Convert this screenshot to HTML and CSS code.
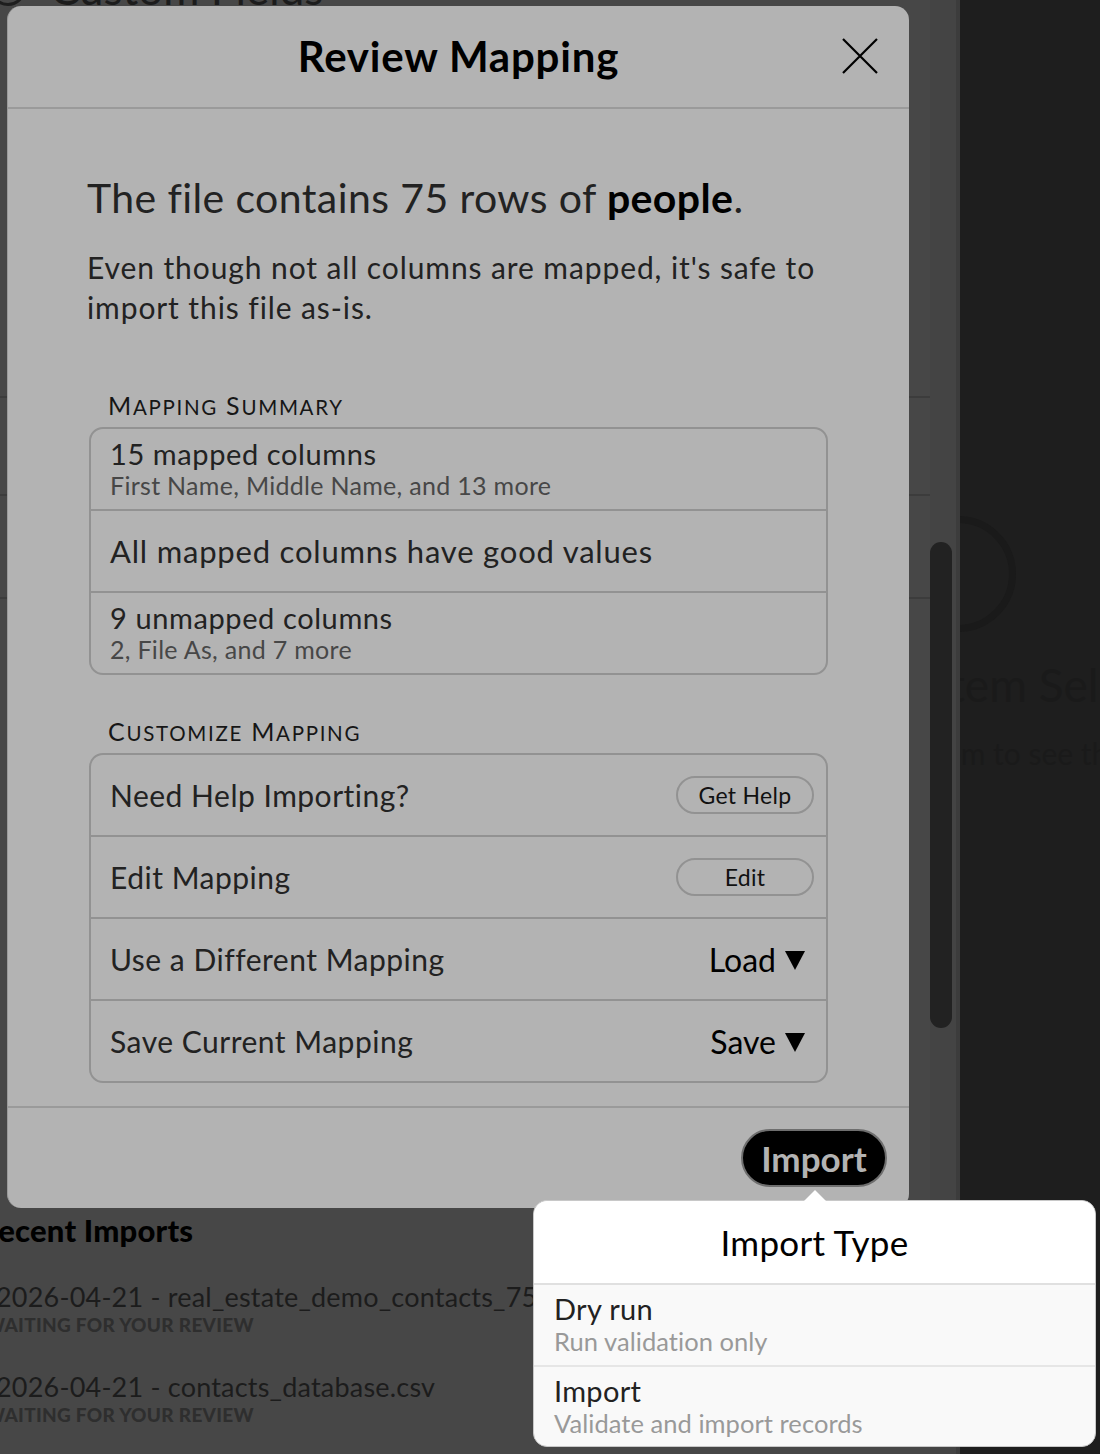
FILE: index.html
```html
<!DOCTYPE html>
<html>
<head>
<meta charset="utf-8">
<link rel="stylesheet" href="styles.css">
</head>
<body>
<div class="page">
  <div class="main">
    <div class="bg-top">
      <span class="bg-icon"></span>
      <span class="bg-heading">Custom Fields</span>
    </div>
    <div class="bg-list">
      <div class="bg-row bg-row-a"></div>
      <div class="bg-row bg-row-b"></div>
      <div class="bg-row bg-row-c"></div>
    </div>
    <div class="recent">
      <h2 class="recent-title">Recent Imports</h2>
      <div class="recent-item">
        <div class="recent-name">2026-04-21 - real_estate_demo_contacts_75.csv</div>
        <div class="recent-status">WAITING FOR YOUR REVIEW</div>
      </div>
      <div class="recent-item">
        <div class="recent-name">2026-04-21 - contacts_database.csv</div>
        <div class="recent-status">WAITING FOR YOUR REVIEW</div>
      </div>
    </div>
  </div>
  <div class="track"><div class="thumb"></div></div>
  <div class="detail">
    <div class="detail-circle"></div>
    <div class="detail-title">No Item Selected</div>
    <div class="detail-text">Select an item to see the details</div>
  </div>
</div>

<div class="modal">
  <div class="modal-header">
    <h1 class="modal-title">Review Mapping</h1>
    <svg class="close" width="36" height="36" viewBox="0 0 36 36"><path d="M1 1 L35 35 M35 1 L1 35" stroke="#000" stroke-width="2.2" fill="none"/></svg>
  </div>
  <div class="modal-body">
    <p class="lead">The file contains 75 rows of <b>people</b>.</p>
    <p class="para">Even though not all columns are mapped, it's safe to import this file as-is.</p>

    <div class="section-label">M<span class="sc">APPING</span> S<span class="sc">UMMARY</span></div>
    <div class="card">
      <div class="row row-stack">
        <div class="row-main">15 mapped columns</div>
        <div class="row-sub">First Name, Middle Name, and 13 more</div>
      </div>
      <div class="row">
        <div class="row-main row-big">All mapped columns have good values</div>
      </div>
      <div class="row row-stack">
        <div class="row-main">9 unmapped columns</div>
        <div class="row-sub">2, File As, and 7 more</div>
      </div>
    </div>

    <div class="section-label section-label-2">C<span class="sc">USTOMIZE</span> M<span class="sc">APPING</span></div>
    <div class="card">
      <div class="row">
        <div class="row-main">Need Help Importing?</div>
        <span class="pill">Get Help</span>
      </div>
      <div class="row">
        <div class="row-main">Edit Mapping</div>
        <span class="pill">Edit</span>
      </div>
      <div class="row">
        <div class="row-main">Use a Different Mapping</div>
        <span class="drop">Load<span class="tri"></span></span>
      </div>
      <div class="row">
        <div class="row-main">Save Current Mapping</div>
        <span class="drop">Save<span class="tri"></span></span>
      </div>
    </div>
  </div>
  <div class="modal-footer">
    <span class="import-btn">Import</span>
  </div>
</div>

<div class="popover">
  <div class="popover-title">Import Type</div>
  <div class="popover-item">
    <div class="pi-main">Dry run</div>
    <div class="pi-sub">Run validation only</div>
  </div>
  <div class="popover-item">
    <div class="pi-main">Import</div>
    <div class="pi-sub">Validate and import records</div>
  </div>
</div>
</body>
</html>
```

FILE: styles.css
```css
html, body {
  margin: 0;
  padding: 0;
}
body {
  font-family: "Lato", "Open Sans", sans-serif;
  width: 1100px;
  height: 1454px;
  overflow: hidden;
  position: relative;
  background: #464646;
}
.page {
  display: flex;
  width: 1100px;
  height: 1454px;
}
.main {
  width: 930px;
  background: #474747;
  overflow: hidden;
  display: flex;
  flex-direction: column;
}
.bg-top {
  height: 0;
  position: relative;
}
.bg-icon {
  position: absolute;
  left: -10px;
  top: -30px;
  width: 30px;
  height: 30px;
  border: 3px solid #1e1e1e;
  border-radius: 50%;
}
.bg-heading {
  position: absolute;
  left: 50px;
  top: -38px;
  font-size: 44px;
  color: #1c1c1c;
  white-space: nowrap;
}
.bg-list {
  display: flex;
  flex-direction: column;
}
.bg-row {
  border-bottom: 2px solid #3c3c3c;
}
.bg-row-a { height: 396px; }
.bg-row-b { height: 96px; }
.bg-row-c { height: 101px; }
.recent {
  margin-top: 611px;
}
.recent-title {
  margin: 0 0 0 -21px;
  font-size: 31px;
  font-weight: 900;
  color: #000;
  line-height: 40px;
  letter-spacing: 0.2px;
}
.recent-item {
  margin: 0 0 0 -4px;
  padding-top: 32px;
  padding-bottom: 2px;
}
.recent-name {
  font-size: 27px;
  line-height: 30px;
  color: #1c1c1c;
  white-space: nowrap;
  letter-spacing: 0.2px;
}
.recent-status {
  margin-left: -11px;
  font-size: 19px;
  font-weight: 900;
  line-height: 26px;
  color: #2e2e2e;
  letter-spacing: 0.3px;
}
.track {
  width: 26px;
  background: #444;
  border-right: 4px solid #3c3c3c;
  display: flex;
  flex-direction: column;
}
.thumb {
  margin-top: 542px;
  width: 22px;
  height: 486px;
  border-radius: 11px;
  background: #222;
}
.detail {
  flex: 1;
  background: #1e1e1e;
  overflow: hidden;
  display: flex;
  flex-direction: column;
}
.detail-circle {
  margin-top: 516px;
  margin-left: -60px;
  width: 102px;
  height: 102px;
  border: 7px solid #1a1a1a;
  border-radius: 50%;
  flex: none;
}
.detail-title {
  margin-top: 25px;
  margin-left: -96px;
  font-size: 46px;
  line-height: 56px;
  color: #1a1a1a;
  white-space: nowrap;
}
.detail-text {
  margin-top: 22px;
  margin-left: -160px;
  font-size: 30px;
  line-height: 36px;
  color: #1a1a1a;
  white-space: nowrap;
}

/* modal */
.modal {
  position: absolute;
  left: 7px;
  top: 6px;
  width: 902px;
  height: 1202px;
  box-sizing: border-box;
  background: #b3b3b3;
  border-radius: 14px;
  border-left: 1px solid #9a9a9a;
  display: flex;
  flex-direction: column;
  color: #222;
}
.modal-header {
  height: 99px;
  padding-bottom: 2px;
  flex: none;
  border-bottom: 2px solid #9a9a9a;
  display: flex;
  align-items: center;
  justify-content: center;
  position: relative;
}
.modal-title {
  margin: 0;
  font-size: 42px;
  font-weight: 700;
  color: #000;
  letter-spacing: 0.8px;
}
.close {
  position: absolute;
  right: 31px;
  top: 32px;
}
.modal-body {
  flex: 1;
  padding: 0 81px 0 81px;
}
.lead {
  margin: 66px 0 0 -2px;
  font-size: 41px;
  line-height: 46px;
  color: #222;
  letter-spacing: 0.4px;
}
.lead b {
  color: #000;
  font-weight: 700;
}
.para {
  margin: 26px 0 0 -2px;
  font-size: 30px;
  line-height: 40px;
  color: #222;
  letter-spacing: 0.9px;
}
.section-label {
  margin: 64px 0 0 19px;
  font-size: 25px;
  line-height: 28px;
  color: #161616;
  letter-spacing: 1.7px;
}
.section-label .sc {
  font-size: 20.5px;
}
.section-label-2 {
  margin-top: 42px;
}
.card {
  margin-top: 6px;
  border: 2px solid #929292;
  border-radius: 14px;
  overflow: hidden;
}
.row {
  height: 80px;
  display: flex;
  align-items: center;
  justify-content: space-between;
  padding: 0 12px 0 19px;
  border-top: 2px solid #929292;
}
.row:first-child {
  border-top: none;
}
.row-stack {
  flex-direction: column;
  align-items: flex-start;
  justify-content: center;
}
.row-main {
  font-size: 30px;
  line-height: 34px;
  color: #222;
  letter-spacing: 0.5px;
}
.row-big {
  font-size: 31px;
  letter-spacing: 0.8px;
}
.row-stack .row-main {
  font-size: 29px;
  line-height: 32px;
  letter-spacing: 0.6px;
}
.row-sub {
  font-size: 25px;
  line-height: 30px;
  color: #474747;
  letter-spacing: 0.3px;
}
.pill {
  width: 134px;
  height: 34px;
  border: 2px solid #929292;
  border-radius: 19px;
  display: flex;
  align-items: center;
  justify-content: center;
  font-size: 23px;
  color: #111;
  letter-spacing: 0.3px;
}
.drop {
  display: flex;
  align-items: center;
  font-size: 32px;
  color: #000;
  margin-right: 9px;
}
.tri {
  width: 0;
  height: 0;
  border-left: 10px solid transparent;
  border-right: 10px solid transparent;
  border-top: 19px solid #000;
  margin-left: 9px;
  margin-top: 2px;
}
.modal-footer {
  height: 100px;
  flex: none;
  border-top: 2px solid #9a9a9a;
  display: flex;
  align-items: center;
  justify-content: flex-end;
  padding-right: 22px;
}
.import-btn {
  width: 142px;
  height: 54px;
  border: 2px solid #6e6e6e;
  border-radius: 30px;
  background: #000;
  color: #b3b3b3;
  font-size: 35px;
  font-weight: 700;
  display: flex;
  align-items: center;
  justify-content: center;
}

/* popover */
.popover {
  position: absolute;
  left: 533px;
  top: 1200px;
  width: 563px;
  height: 247px;
  box-sizing: border-box;
  background: #f9f9f9;
  border: 1px solid #c8c8c8;
  border-radius: 14px;
  display: flex;
  flex-direction: column;
}
.popover::before {
  content: "";
  position: absolute;
  left: 269px;
  top: -11px;
  width: 0;
  height: 0;
  border-left: 12px solid transparent;
  border-right: 12px solid transparent;
  border-bottom: 12px solid #fff;
}
.popover-title {
  height: 82px;
  flex: none;
  background: #fff;
  border-radius: 14px 14px 0 0;
  border-bottom: 2px solid #e0e0e0;
  display: flex;
  align-items: center;
  justify-content: center;
  font-size: 35px;
  color: #000;
  letter-spacing: 0.3px;
}
.popover-item {
  height: 80px;
  display: flex;
  flex-direction: column;
  justify-content: center;
  padding-left: 20px;
  border-top: 2px solid #e6e6e6;
}
.popover-item:nth-child(2) {
  border-top: none;
}
.pi-main {
  font-size: 29px;
  line-height: 33px;
  color: #222;
  letter-spacing: 0.3px;
}
.pi-sub {
  font-size: 25.5px;
  line-height: 32px;
  color: #999;
  letter-spacing: 0.05px;
}
```
